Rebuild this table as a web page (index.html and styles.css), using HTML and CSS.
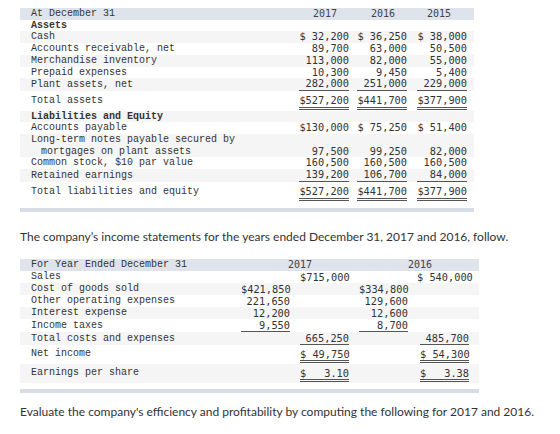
FILE: index.html
```html
<!DOCTYPE html>
<html lang="en">
<head>
<meta charset="UTF-8" />
<title>Balance sheets and income statements</title>
<link rel="stylesheet" href="styles.css">
</head>
<body>
  <div class="statement balance">
    <table>
      <colgroup>
        <col class="c-label"><col class="c-num"><col class="c-num"><col class="c-last">
      </colgroup>
      <tr class="head">
        <th class="label">At December 31</th>
        <th class="year">2017</th>
        <th class="year">2016</th>
        <th class="year last">2015</th>
      </tr>
      <tr>
        <td class="label bold">Assets</td><td></td><td></td><td class="last"></td>
      </tr>
      <tr class="alt">
        <td class="label">Cash</td>
        <td><span class="amt">$ 32,200</span></td>
        <td><span class="amt">$ 36,250</span></td>
        <td class="last"><span class="amt">$ 38,000</span></td>
      </tr>
      <tr>
        <td class="label">Accounts receivable, net</td>
        <td><span class="amt">89,700</span></td>
        <td><span class="amt">63,000</span></td>
        <td class="last"><span class="amt">50,500</span></td>
      </tr>
      <tr class="alt">
        <td class="label">Merchandise inventory</td>
        <td><span class="amt">113,000</span></td>
        <td><span class="amt">82,000</span></td>
        <td class="last"><span class="amt">55,000</span></td>
      </tr>
      <tr>
        <td class="label">Prepaid expenses</td>
        <td><span class="amt">10,300</span></td>
        <td><span class="amt">9,450</span></td>
        <td class="last"><span class="amt">5,400</span></td>
      </tr>
      <tr class="alt">
        <td class="label">Plant assets, net</td>
        <td><span class="amt single">282,000</span></td>
        <td><span class="amt single">251,000</span></td>
        <td class="last"><span class="amt single">229,000</span></td>
      </tr>
      <tr class="total">
        <td class="label">Total assets</td>
        <td><span class="amt double">$527,200</span></td>
        <td><span class="amt double">$441,700</span></td>
        <td class="last"><span class="amt double">$377,900</span></td>
      </tr>
      <tr class="alt">
        <td class="label bold">Liabilities and Equity</td><td></td><td></td><td class="last"></td>
      </tr>
      <tr>
        <td class="label">Accounts payable</td>
        <td><span class="amt">$130,000</span></td>
        <td><span class="amt">$ 75,250</span></td>
        <td class="last"><span class="amt">$ 51,400</span></td>
      </tr>
      <tr class="alt wrap">
        <td class="label">Long-term notes payable secured by<br><span class="indent">mortgages on plant assets</span></td>
        <td><span class="amt">97,500</span></td>
        <td><span class="amt">99,250</span></td>
        <td class="last"><span class="amt">82,000</span></td>
      </tr>
      <tr>
        <td class="label">Common stock, $10 par value</td>
        <td><span class="amt">160,500</span></td>
        <td><span class="amt">160,500</span></td>
        <td class="last"><span class="amt">160,500</span></td>
      </tr>
      <tr class="alt">
        <td class="label">Retained earnings</td>
        <td><span class="amt single">139,200</span></td>
        <td><span class="amt single">106,700</span></td>
        <td class="last"><span class="amt single">84,000</span></td>
      </tr>
      <tr class="total">
        <td class="label">Total liabilities and equity</td>
        <td><span class="amt double">$527,200</span></td>
        <td><span class="amt double">$441,700</span></td>
        <td class="last"><span class="amt double">$377,900</span></td>
      </tr>
    </table>
  </div>

  <p class="note first">The company’s income statements for the years ended December 31, 2017 and 2016, follow.</p>

  <div class="statement income">
    <table>
      <colgroup>
        <col class="i-label"><col class="i-in"><col class="i-out"><col class="i-out"><col class="i-last">
      </colgroup>
      <tr class="head">
        <th class="label">For Year Ended December 31</th>
        <th class="span-2017" colspan="2">2017</th>
        <th class="span-2016" colspan="2">2016</th>
      </tr>
      <tr>
        <td class="label">Sales</td>
        <td></td>
        <td><span class="amt">$715,000</span></td>
        <td></td>
        <td class="last"><span class="amt wide">$ 540,000</span></td>
      </tr>
      <tr class="alt">
        <td class="label">Cost of goods sold</td>
        <td><span class="amt">$421,850</span></td>
        <td></td>
        <td><span class="amt">$334,800</span></td>
        <td class="last"></td>
      </tr>
      <tr>
        <td class="label">Other operating expenses</td>
        <td><span class="amt">221,650</span></td>
        <td></td>
        <td><span class="amt">129,600</span></td>
        <td class="last"></td>
      </tr>
      <tr class="alt">
        <td class="label">Interest expense</td>
        <td><span class="amt">12,200</span></td>
        <td></td>
        <td><span class="amt">12,600</span></td>
        <td class="last"></td>
      </tr>
      <tr>
        <td class="label">Income taxes</td>
        <td><span class="amt single">9,550</span></td>
        <td></td>
        <td><span class="amt single">8,700</span></td>
        <td class="last"></td>
      </tr>
      <tr class="alt">
        <td class="label">Total costs and expenses</td>
        <td></td>
        <td><span class="amt single">665,250</span></td>
        <td></td>
        <td class="last"><span class="amt single">485,700</span></td>
      </tr>
      <tr class="total">
        <td class="label">Net income</td>
        <td></td>
        <td><span class="amt double">$ 49,750</span></td>
        <td></td>
        <td class="last"><span class="amt double">$ 54,300</span></td>
      </tr>
      <tr class="alt total">
        <td class="label">Earnings per share</td>
        <td></td>
        <td><span class="amt double split"><span>$</span><span>3.10</span></span></td>
        <td></td>
        <td class="last"><span class="amt double split"><span>$</span><span>3.38</span></span></td>
      </tr>
    </table>
  </div>

  <p class="note second">Evaluate the company's efficiency and profitability by computing the following for 2017 and 2016.</p>
</body>
</html>
```

FILE: styles.css
```css
/* base */
* {margin: 0; padding: 0; box-sizing: border-box;}
body {
  background: #fff;
  color: #333;
  padding: 8px 0 0 20px;
  font-family: "Liberation Mono", monospace;
  font-size: 10px;
}

/* statement tables */
.statement {
  border-bottom: 4px solid #d7dce6;
}
.statement table {
  border-collapse: collapse;
  table-layout: fixed;
}
.balance {
  width: 454px;
  padding-bottom: 6px;
}
.balance table { width: 454px; }
.c-label { width: 271px; }
.c-num { width: 58px; }
.c-last { width: 67px; }

.income {
  width: 459px;
  padding-bottom: 6px;
}
.income table { width: 459px; }
.i-label { width: 216px; }
.i-in { width: 54px; }
.i-out { width: 59px; }
.i-last { width: 71px; }

th, td {
  padding: 0;
  height: 11.7px;
  line-height: 11.7px;
  font-weight: normal;
  text-align: right;
  vertical-align: bottom;
  white-space: nowrap;
  color: #333;
}
.income th, .income td {
  height: 12px;
  line-height: 12px;
}
.head th {
  background: #dfe3ec;
}
.head .year {
  text-align: center;
  padding-left: 10px;
  font-family: "DejaVu Sans Mono", monospace;
  font-size: 10px;
  color: #444;
}
.head .year.last {
  padding-left: 4px;
}
.span-2017, .span-2016 {
  text-align: left !important;
  font-family: "DejaVu Sans Mono", monospace;
  font-size: 10px;
  color: #444;
}
.span-2017 { padding-left: 52px !important; }
.span-2016 { padding-left: 59px !important; }

.label {
  text-align: left;
  padding-left: 11px;
}
.bold {
  font-weight: bold;
}
.indent {
  padding-left: 10px;
}
.last {
  padding-right: 7px;
}
.income .last {
  padding-right: 10px;
}
tr.alt td {
  background: #f5f5f5;
}

/* amounts */
.amt {
  display: block;
  width: 50px;
  margin-left: auto;
  text-align: right;
  font-family: "DejaVu Sans Mono", monospace;
  font-size: 10.3px;
  color: #333;
  white-space: pre;
}
.income .amt { width: 49px; }
.income .amt.wide { width: 52px; }
.amt.single {
  border-bottom: 1px solid #555;
}
.amt.double {
  border-bottom: 3px double #555;
}
.amt.split {
  display: flex;
  justify-content: space-between;
}
tr.total td {
  padding-top: 4px;
  padding-bottom: 1px;
}
tr.total td.label {
  vertical-align: top;
}
.income tr.total td {
  padding-top: 3px;
  padding-bottom: 1px;
}

/* text */
.note {
  font-family: Lato, "Open Sans", sans-serif;
  font-size: 12px;
  line-height: 16px;
  color: #333;
}
.note.first {
  margin: 17px 0 14px;
}
.note.second {
  margin-top: 11px;
}
```
